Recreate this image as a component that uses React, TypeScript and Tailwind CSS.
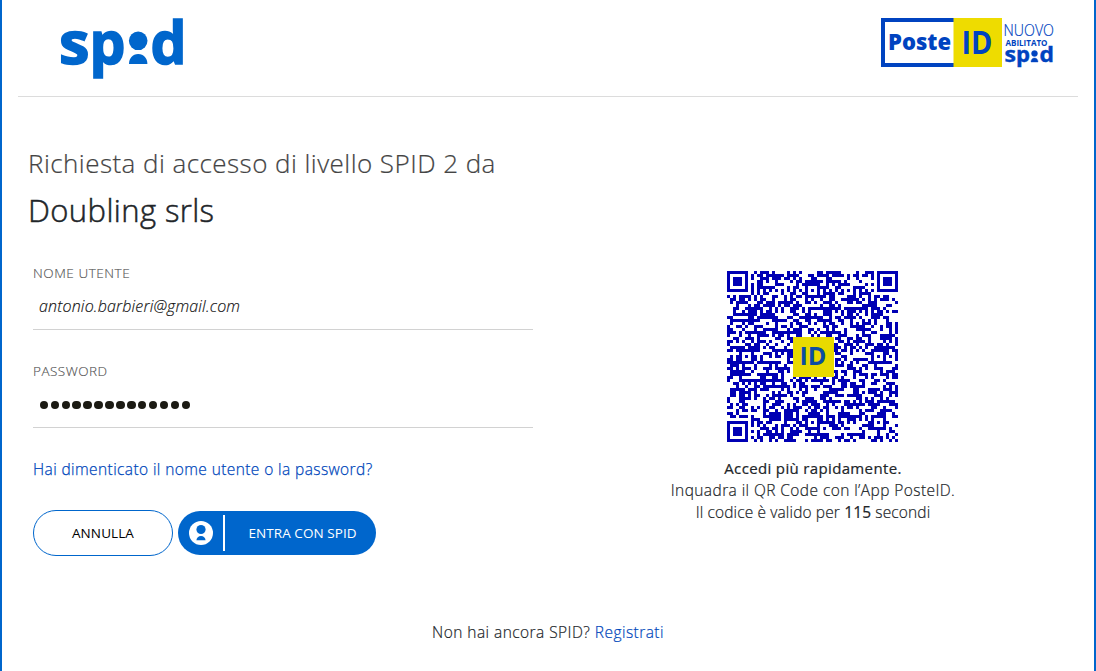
const QR_SIZE = 57;
const ALIGN_CENTERS = [
  [6, 28],
  [28, 6],
  [28, 28],
  [28, 50],
  [50, 28],
  [50, 50],
];

// distance from a square's centre -> ring of dark / light modules
function ring(x: number, y: number, cx: number, cy: number) {
  return Math.max(Math.abs(x - cx), Math.abs(y - cy));
}

function buildQrPath() {
  let seed = 20177;
  let d = "";
  const finders = [
    [3, 3],
    [QR_SIZE - 4, 3],
    [3, QR_SIZE - 4],
  ];

  for (let y = 0; y < QR_SIZE; y++) {
    for (let x = 0; x < QR_SIZE; x++) {
      seed = (seed * 1103515245 + 12345) % 2147483648;
      let dark = (seed >> 12) % 100 < 52;

      if (x === 6 || y === 6) dark = (x + y) % 2 === 0;
      for (const [cx, cy] of ALIGN_CENTERS) {
        const r = ring(x, y, cx, cy);
        if (r <= 2) dark = r !== 1;
      }
      for (const [cx, cy] of finders) {
        const r = ring(x, y, cx, cy);
        if (r <= 4) dark = r !== 2 && r !== 4;
      }
      if (dark) d += `M${x} ${y}h1v1h-1z`;
    }
  }
  return d;
}

const qrPath = buildQrPath();

function SpidLogo() {
  return (
    <svg width="124" height="62" viewBox="60 17 124 62" fill="#06c" className="overflow-visible font-['Open_Sans',sans-serif] font-bold" role="img" aria-label="spid">
      <text x="59" y="63.5" fontSize="59" textLength="30.5" lengthAdjust="spacingAndGlyphs" stroke="#06c" strokeWidth="1.6">s</text>
      <text x="89.5" y="63.5" fontSize="59" textLength="36" lengthAdjust="spacingAndGlyphs" stroke="#06c" strokeWidth="1.6">p</text>
      <circle cx="138.2" cy="40.8" r="9.3" />
      <path d="M129 64c0-5.5 3.5-10 9.2-10s9.2 4.5 9.2 10z" />
      <text x="150.5" y="63.5" fontSize="59" textLength="36" lengthAdjust="spacingAndGlyphs" stroke="#06c" strokeWidth="1.6">d</text>
    </svg>
  );
}

function PosteIdLogo() {
  return (
    <svg width="174" height="50" viewBox="881 18 174 50" fill="#0043c0" className="overflow-visible font-['Open_Sans',sans-serif]" role="img" aria-label="PosteID abilitato spid">
      <path d="M881 18h73v4h-69v41h69v4h-73z" />
      <path d="M953.5 18H1002v49h-48.5z" fill="#eedc00" />
      <text x="888" y="50" fontSize="22" fontWeight="800" textLength="63" lengthAdjust="spacingAndGlyphs">Poste</text>
      <text x="961.5" y="54" fontSize="33" fontWeight="700" textLength="31" lengthAdjust="spacingAndGlyphs">ID</text>
      <text x="1003.5" y="36" fontSize="15.5" fontWeight="300" stroke="#0043c0" strokeWidth="0.2" textLength="50.5" lengthAdjust="spacingAndGlyphs">NUOVO</text>
      <text x="1005.5" y="45.5" fontSize="8" fontWeight="700" textLength="42" lengthAdjust="spacingAndGlyphs">ABILITATO</text>
      <g fontSize="21" fontWeight="700" stroke="#0043c0" strokeWidth="0.4">
        <text x="1004.5" y="62" textLength="11.5" lengthAdjust="spacingAndGlyphs">s</text>
        <text x="1016" y="62" textLength="14" lengthAdjust="spacingAndGlyphs">p</text>
        <circle cx="1034.5" cy="53.5" r="3" />
        <path d="M1031 62c0-2.300 1.300-4 3.500-4s3.500 1.700 3.500 4z" />
        <text x="1039.5" y="62" textLength="14.5" lengthAdjust="spacingAndGlyphs">d</text>
      </g>
    </svg>
  );
}

function QrCode() {
  return (
    <svg width="171" height="171" viewBox="0 0 171 171" className="font-['Open_Sans',sans-serif]" role="img" aria-label="QR Code">
      <path d={qrPath} transform="scale(3)" fill="#0000b4" shapeRendering="crispEdges" />
      <path d="M66 66h41v40H66z" fill="#e8da00" />
      <text x="72.5" y="93.5" fontSize="25" fontWeight="700" fill="#0c4da2" textLength="27" lengthAdjust="spacingAndGlyphs">ID</text>
    </svg>
  );
}

function UserIcon() {
  return (
    <svg width="24" height="24" viewBox="0 0 24 24" className="shrink-0">
      <circle cx="12" cy="12" r="12" fill="#fff" />
      <circle cx="12" cy="8.5" r="4.6" fill="#06c" />
      <path d="M7.4 19.3c.3-2.600 2-4.300 4.600-4.300s4.300 1.700 4.600 4.300z" fill="#06c" />
    </svg>
  );
}

export default function App() {
  return (
    <div className="flex h-[671px] flex-col overflow-hidden border-x-2 border-[#06c] bg-white font-['Open_Sans',sans-serif] text-[#212529]">
      <header className="mx-4 flex h-[97px] shrink-0 items-start justify-between border-b border-[#dcdcdc] pt-[17px] pr-[23px] pl-[42px]">
        <SpidLogo />
        <div className="pt-px">
          <PosteIdLogo />
        </div>
      </header>

      <main className="flex h-[511px] shrink-0 pl-[26px]">
        <section className="w-[520px] pt-[46px]">
          <h1 className="h-[44px] text-[26px] leading-[40px] font-light tracking-[0.45px] whitespace-nowrap text-[#444] [-webkit-text-stroke:0.2px]">
            Richiesta di accesso di livello SPID 2 da
          </h1>
          <h2 className="h-[51px] text-[31px] leading-[46px] font-light tracking-[0.4px] whitespace-nowrap [-webkit-text-stroke:0.5px]">
            Doubling srls
          </h2>

          <form className="ml-[5px] w-[500px] pt-[24px]">
            <div className="h-[68px] border-b border-[#d2d2d2]">
              <div className="h-[22px] text-[13.5px] leading-[22px] font-light tracking-[0.55px] text-[#555] [-webkit-text-stroke:0.15px]">NOME UTENTE</div>
              <div className="pt-[11px] pl-[6px] text-[16px] leading-[22px] font-light tracking-[0.17px] text-[#111] italic [-webkit-text-stroke:0.15px]">antonio.barbieri@gmail.com</div>
            </div>
            <div className="mt-[30px] h-[68px] border-b border-[#d2d2d2]">
              <div className="h-[22px] text-[13.5px] leading-[22px] font-light tracking-[0.5px] text-[#555] [-webkit-text-stroke:0.15px]">PASSWORD</div>
              <div className="flex gap-[2.43px] pt-[18.5px] pl-[6.7px]">
                {Array.from({ length: 14 }, (_, i) => (
                  <span key={i} className="size-[8.5px] shrink-0 rounded-full bg-[#1c1b14]" />
                ))}
              </div>
            </div>
            <a className="mt-[30px] block h-[22px] text-[15.5px] leading-[22px] font-light tracking-[0.4px] whitespace-nowrap text-[#0047bb] [-webkit-text-stroke:0.25px]">
              Hai dimenticato il nome utente o la password?
            </a>
            <div className="mt-[30px] flex items-center gap-[5px]">
              <button type="button" className="h-[46px] w-[140px] rounded-full border border-[#06c] pt-px text-[13.5px] tracking-[0.1px] text-black">
                ANNULLA
              </button>
              <button type="button" className="flex h-[44px] w-[198px] items-center rounded-full bg-[#06c] pl-[11px] text-[13.5px] text-white">
                <UserIcon />
                <span className="ml-[10px] h-[36px] w-[1.5px] bg-white" />
                <span className="ml-[24px] pt-px tracking-[0.06px] whitespace-nowrap">ENTRA CON SPID</span>
              </button>
            </div>
          </form>
        </section>

        <aside className="ml-[63px] flex w-[404px] flex-col items-center pt-[174px]">
          <div className="-ml-[2px]">
            <QrCode />
          </div>
          <div className="mt-[15px] text-center text-[15.5px] leading-[22px] font-light whitespace-nowrap [-webkit-text-stroke:0.2px]">
            <p className="text-[15px] font-medium tracking-[0.35px]">Accedi più rapidamente.</p>
            <p className="tracking-[0.42px]">Inquadra il QR Code con l’App PosteID.</p>
            <p className="tracking-[0.13px]">
              Il codice è valido per <b className="font-medium">115</b> secondi
            </p>
          </div>
        </aside>
      </main>

      <footer className="pt-[13px] text-center text-[15.5px] leading-[22px] font-light tracking-[0.45px] [-webkit-text-stroke:0.2px]">
        Non hai ancora SPID? <a className="text-[#0047bb]">Registrati</a>
      </footer>
    </div>
  );
}
